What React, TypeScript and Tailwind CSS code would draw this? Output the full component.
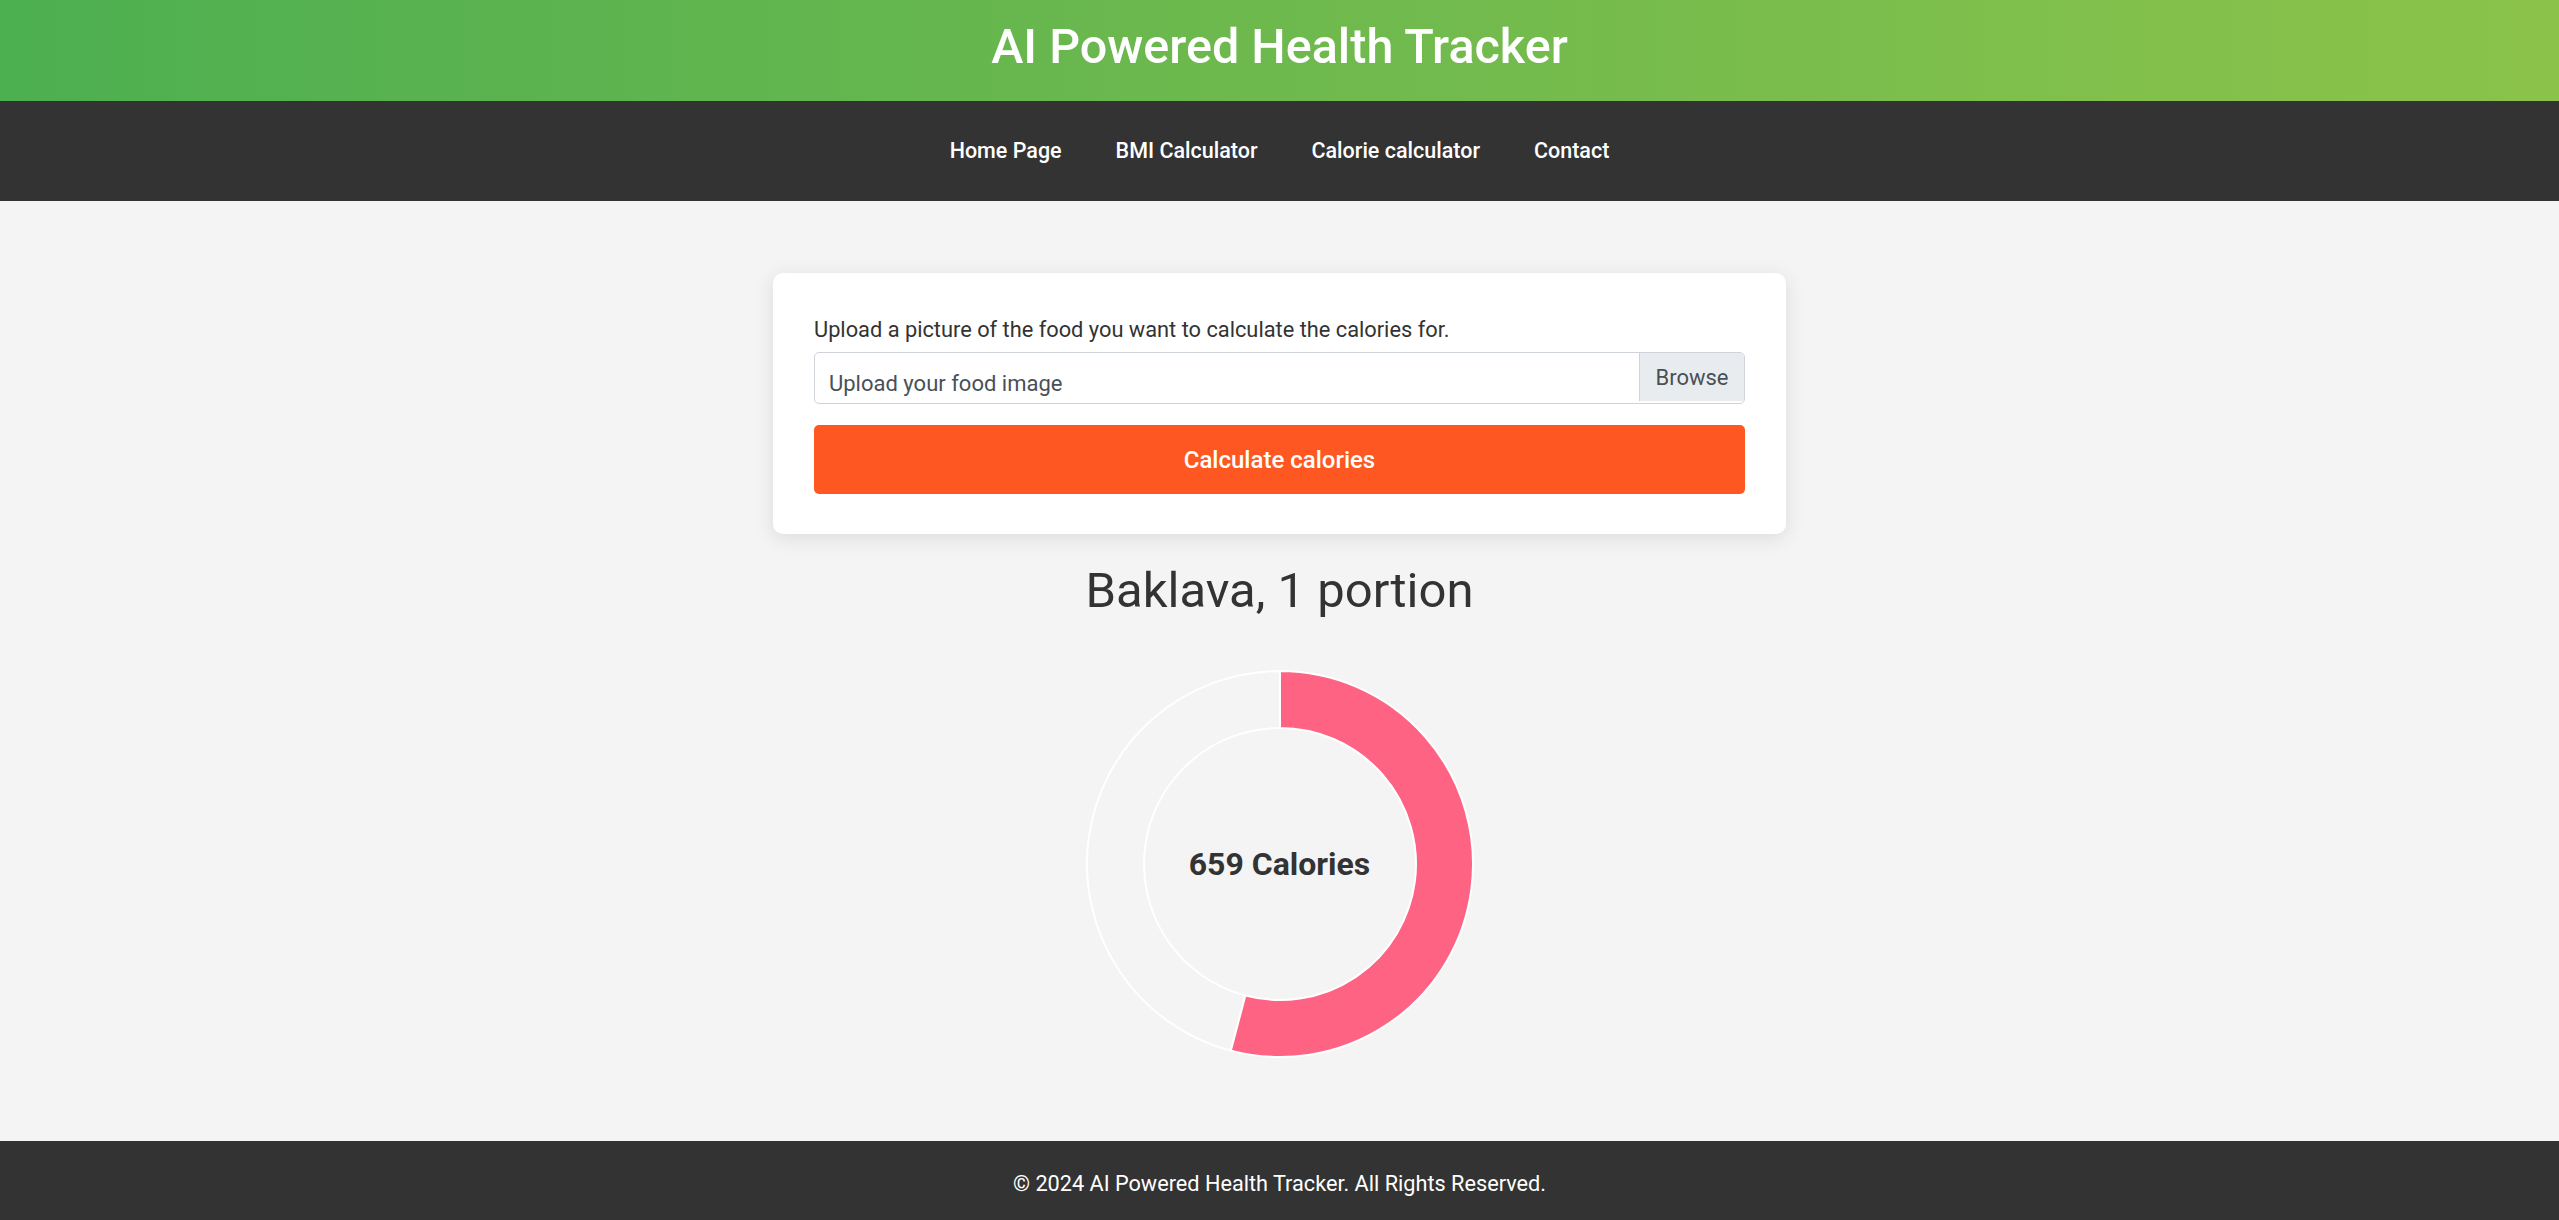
import React from "react";

function Donut() {
  const cx = 195;
  const cy = 195;
  const R = 193;
  const r = 136;
  const frac = 0.541;
  const a = frac * 2 * Math.PI;
  const ox = cx + R * Math.sin(a);
  const oy = cy - R * Math.cos(a);
  const ix = cx + r * Math.sin(a);
  const iy = cy - r * Math.cos(a);
  const large = frac > 0.5 ? 1 : 0;
  const pink = `M ${cx} ${cy - R} A ${R} ${R} 0 ${large} 1 ${ox} ${oy} L ${ix} ${iy} A ${r} ${r} 0 ${large} 0 ${cx} ${cy - r} Z`;
  const rest = `M ${ox} ${oy} A ${R} ${R} 0 ${1 - large} 1 ${cx} ${cy - R} L ${cx} ${cy - r} A ${r} ${r} 0 ${1 - large} 0 ${ix} ${iy} Z`;
  return (
    <div className="relative w-[390px] h-[390px]">
      <svg width="390" height="390" viewBox="0 0 390 390">
        <path d={rest} fill="#f4f4f4" stroke="#ffffff" strokeWidth="2" strokeLinejoin="round" />
        <path d={pink} fill="#ff6384" stroke="#ffffff" strokeWidth="2" strokeLinejoin="round" />
      </svg>
      <div className="absolute inset-0 flex items-center justify-center">
        <span className="text-[32px] font-bold text-[#333333] leading-none">659 Calories</span>
      </div>
    </div>
  );
}

export default function App() {
  return (
    <div className="min-h-screen flex flex-col bg-[#f4f4f4] font-['Roboto',_sans-serif]">
      <header className="h-[101px] flex items-center justify-center bg-gradient-to-r from-[#4caf50] to-[#8bc34a]">
        <h1 className="text-[48.5px] font-medium text-white leading-none pb-[7px]">AI Powered Health Tracker</h1>
      </header>
      <nav className="h-[100px] bg-[#333333] flex items-center justify-center gap-[54px]">
        <a className="text-white text-[21.5px] font-medium">Home Page</a>
        <a className="text-white text-[21.5px] font-medium">BMI Calculator</a>
        <a className="text-white text-[21.5px] font-medium">Calorie calculator</a>
        <a className="text-white text-[21.5px] font-medium">Contact</a>
      </nav>
      <main className="flex-1 flex flex-col items-center pt-[72px]">
        <div className="w-[1013px] bg-white rounded-[10px] shadow-[0_4px_20px_rgba(0,0,0,0.1)] px-[41px] pt-[43px] pb-[40px]">
          <label className="block text-[21.8px] leading-[28px] text-[#333333] mb-[8px]">
            Upload a picture of the food you want to calculate the calories for.
          </label>
          <div className="h-[52px] flex border border-[#ced4da] rounded-[5px] overflow-hidden">
            <div className="flex-1 flex items-center pl-[14px] pt-[11px] text-[22px] text-[#495057]">
              Upload your food image
            </div>
            <div className="w-[105px] bg-[#e9ecef] border-l border-[#ced4da] flex items-center justify-center text-[22px] text-[#495057] mb-[2px]">
              Browse
            </div>
          </div>
          <button className="mt-[21px] w-full h-[69px] bg-[#ff5722] rounded-[5px] text-white text-[24px] font-medium">
            Calculate calories
          </button>
        </div>
        <h2 className="mt-[28px] text-[49px] leading-[58px] font-normal text-[#333333]">Baklava, 1 portion</h2>
        <div className="mt-[49px]">
          <Donut />
        </div>
      </main>
      <footer className="h-[79px] bg-[#333333] flex items-center justify-center pt-[8px]">
        <p className="text-white text-[21.7px]">© 2024 AI Powered Health Tracker. All Rights Reserved.</p>
      </footer>
    </div>
  );
}
